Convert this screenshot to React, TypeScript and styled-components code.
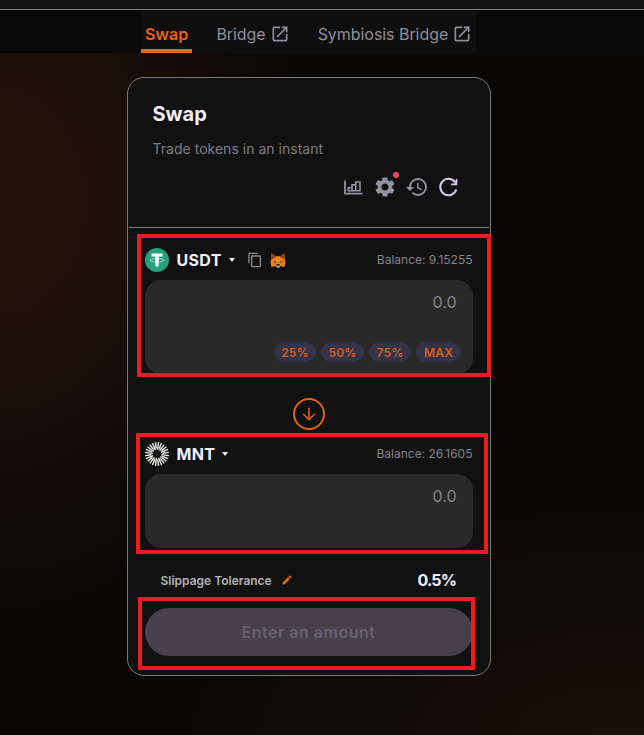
import React from "react";
import styled, { createGlobalStyle } from "styled-components";
import { MdOpenInNew, MdSettings, MdHistory, MdContentCopy, MdEdit } from "react-icons/md";

const GlobalStyle = createGlobalStyle`
  * { box-sizing: border-box; }
  body {
    margin: 0;
    background: #080706;
    font-family: Inter, "Liberation Sans", sans-serif;
  }
  svg { display: block; flex: none; }
`;

const Page = styled.div`
  height: 735px;
  overflow: hidden;
  display: flex;
  flex-direction: column;
  align-items: center;
  background:
    radial-gradient(ellipse 330px 440px at 0 200px, #231209 0%, #1d1009 38%, rgba(20, 12, 8, 0.6) 68%, transparent 100%),
    radial-gradient(ellipse 460px 250px at 620px 745px, #191007 0%, rgba(20, 14, 7, 0.6) 55%, transparent 100%),
    #090807;
`;

const TopStrip = styled.div`
  width: 100%;
  height: 10px;
  background: #111;
  border-bottom: 1px solid #7d7d7d;
`;

const NavBand = styled.div`
  width: 100%;
  height: 43px;
  padding-left: 141px;
  background: #090909;
`;

const Tabs = styled.nav`
  width: 335px;
  height: 43px;
  display: flex;
  background: #0f0f0f;
`;

const Tab = styled.a<{ $active?: boolean; $gap?: number }>`
  height: 43px;
  display: flex;
  align-items: center;
  gap: 4px;
  padding: ${(p) => (p.$active ? "8px 4px 0" : "8px 0 0")};
  margin-right: ${(p) => p.$gap ?? 0}px;
  border-bottom: 4px solid ${(p) => (p.$active ? "#ed6510" : "transparent")};
  border-radius: 2px 2px 0 0;
  color: ${(p) => (p.$active ? "#ed5f12" : "#8f8e9b")};
  font-size: 16px;
  font-weight: ${(p) => (p.$active ? 600 : 400)};
  letter-spacing: ${(p) => (p.$active ? "0.1px" : "-0.05px")};
  white-space: nowrap;
`;

const Card = styled.main`
  width: 364px;
  height: 599px;
  margin: 24px 26px 0 0;
  position: relative;
  border: 1px solid #7c7a78;
  border-radius: 17px;
  background: #111;
`;

const Header = styled.header`
  height: 150px;
  margin: 0 1px;
  padding: 24px 28px 0 23.5px;
  border-bottom: 1px solid #7f7f7f;
`;

const Title = styled.h1`
  margin: 0;
  font-size: 20px;
  line-height: 24px;
  font-weight: 700;
  color: #f4eeff;
`;

const Subtitle = styled.p`
  margin: 12px 0 0;
  font-size: 14px;
  line-height: 21px;
  letter-spacing: 0.02px;
  color: #7f7f86;
`;

const Tools = styled.div`
  display: flex;
  justify-content: flex-end;
  align-items: center;
  gap: 8px;
  height: 24px;
  margin-top: 16px;
  color: #9293a0;
`;

const SettingsTool = styled.span`
  position: relative;
`;

const Dot = styled.i`
  position: absolute;
  top: -3px;
  right: -2px;
  width: 6px;
  height: 6px;
  border-radius: 50%;
  background: #ed4b4b;
  box-shadow: 0 0 0 1px #1a1220;
`;

const Body = styled.div`
  padding: 0 17px;
`;

const TokenRow = styled.div<{ $top: number }>`
  height: 24px;
  margin: ${(p) => p.$top}px 0 8px;
  display: flex;
  align-items: center;
`;

const TokenName = styled.span`
  margin: 0 7px 0 7.5px;
  font-size: 16px;
  font-weight: 700;
  letter-spacing: 0.3px;
  color: #f4eeff;
`;

const Caret = styled.i`
  border: 3.5px solid transparent;
  border-top: 4px solid #f4eeff;
  border-bottom: 0;
`;

const TokenActions = styled.span`
  display: flex;
  align-items: center;
  gap: 7px;
  margin-left: 12px;
  color: #8b8a94;
`;

const Balance = styled.span`
  margin: -2px 0.5px 0 auto;
  font-size: 12px;
  color: #85858c;
`;

const AmountBox = styled.div<{ $height: number }>`
  height: ${(p) => p.$height}px;
  padding: 12px 12px 0;
  border-radius: 16px;
  background: #292929;
`;

const Amount = styled.div`
  height: 21px;
  padding-right: 4.5px;
  font-size: 16px;
  line-height: 21px;
  text-align: right;
  color: #85848b;
`;

const Chips = styled.div`
  display: flex;
  justify-content: flex-end;
  gap: 5px;
  margin-top: 29px;
`;

const Chip = styled.button<{ $width: number }>`
  width: ${(p) => p.$width}px;
  height: 20px;
  padding: 0;
  border: 0;
  border-radius: 10px;
  background: #353347;
  color: #d75f19;
  font: 600 12px/19px Inter, sans-serif;
  letter-spacing: 0.2px;
`;

const SwitchButton = styled.button`
  display: flex;
  align-items: center;
  justify-content: center;
  width: 32px;
  height: 32px;
  margin: 24px auto 0;
  padding: 0;
  border: 2px solid #e5620f;
  border-radius: 50%;
  background: transparent;
`;

const SlippageRow = styled.div`
  height: 24px;
  margin-top: 20px;
  padding: 0 17px 0 15.5px;
  display: flex;
  align-items: center;
  gap: 9px;
  font-size: 12px;
  font-weight: 600;
  color: #b4b4b4;
`;

const SlippageValue = styled.strong`
  margin-left: auto;
  font-size: 16px;
  font-weight: 700;
  letter-spacing: -0.9px;
  color: #f4eeff;
`;

const SubmitButton = styled.button`
  display: block;
  width: 328px;
  height: 48px;
  margin-top: 16px;
  padding: 0 1px 0 0;
  border: 0;
  border-radius: 24px;
  background: #47404b;
  color: #666072;
  font: 600 16px/48px Inter, sans-serif;
  letter-spacing: 0.5px;
`;

/* Red callout frame drawn over the card. */
const Callout = styled.div<{ $x: number; $y: number; $w: number; $h: number }>`
  position: absolute;
  left: ${(p) => p.$x}px;
  top: ${(p) => p.$y}px;
  width: ${(p) => p.$w}px;
  height: ${(p) => p.$h}px;
  border: 4px solid #ed1c24;
  border-radius: 1px;
  pointer-events: none;
`;

const ChartIcon = () => (
  <svg width="24" height="24" viewBox="0 0 24 24" fill="none" stroke="#9293a0" strokeWidth="1.8">
    <path d="M4 5.5v13.2h17.5" />
    <path d="M7.2 15.8v-3h3.8v3M11 15.8V9.9h3.8v5.9M14.8 15.8V7h4.2v8.8M6.4 15.8h13.4" strokeWidth="1.6" />
  </svg>
);

const RefreshIcon = () => (
  <svg width="24" height="24" viewBox="0 0 24 24" fill="none" stroke="#dacdec" strokeWidth="2.1">
    <path d="M18.3 7.4A8.2 8.2 0 1 0 19.3 14.5" />
    <path d="M20.3 4v6.2h-6.2v-1.6h3.4L18.7 7V4z" fill="#dacdec" stroke="none" />
  </svg>
);

const TetherIcon = () => (
  <svg width="24" height="24" viewBox="0 0 24 24">
    <circle cx="12" cy="12" r="12" fill="#26a17b" />
    <path d="M6.5 5.5h11v3h-3.9v10h-3.2v-10H6.5z" fill="#fff" />
    <ellipse cx="12" cy="12.3" rx="7" ry="1.8" fill="none" stroke="#d9efe8" strokeWidth=".7" />
    <path d="M10.4 9h3.2v4.5h-3.2z" fill="#fff" />
  </svg>
);

const FoxIcon = () => (
  <svg width="16" height="16" viewBox="0 0 32 32">
    <path d="M2 3l11 6h6l11-6v12l1 7-2 8-8-2-3 3h-4l-3-3-8 2-2-8 1-7z" fill="#e77d20" />
    <path d="M2 3l11 7-7 3-4 3zM30 3l-11 7 7 3 4 3z" fill="#8a4618" />
    <path d="M13 9h6l2 10-5 3-5-3z" fill="#f6851b" />
    <path d="M7 18l5 1-1 3zM25 18l-5 1 1 3z" fill="#3a2b23" />
    <path d="M11 26l3-2h4l3 2-2 5h-6z" fill="#a99b90" />
    <path d="M13 24h6l1 3h-8z" fill="#29211d" />
  </svg>
);

const MantleIcon = () => (
  <svg width="24" height="24" viewBox="0 0 24 24" stroke="#f4f4f0" strokeWidth="1.35">
    {Array.from({ length: 24 }, (_, i) => (
      <line key={i} x1="12" y1="0.1" x2="12" y2={i % 2 ? 6.4 : 7.8} transform={`rotate(${i * 15 + 7.5} 12 12)`} />
    ))}
  </svg>
);

const ArrowDown = () => (
  <svg width="16" height="16" viewBox="0 0 16 16" fill="none" stroke="#e5620f" strokeWidth="1.5">
    <path d="M8 1.8v12M2.2 8L8 13.8 13.8 8" />
  </svg>
);

const chips = [
  { label: "25%", width: 42 },
  { label: "50%", width: 43 },
  { label: "75%", width: 42 },
  { label: "MAX", width: 45 },
];

export default function App() {
  return (
    <Page>
      <GlobalStyle />
      <TopStrip />
      <NavBand>
        <Tabs>
          <Tab $active $gap={24}>Swap</Tab>
          <Tab $gap={28}>Bridge <MdOpenInNew size={20} /></Tab>
          <Tab>Symbiosis Bridge <MdOpenInNew size={20} /></Tab>
        </Tabs>
      </NavBand>
      <Card>
        <Header>
          <Title>Swap</Title>
          <Subtitle>Trade tokens in an instant</Subtitle>
          <Tools>
            <ChartIcon />
            <SettingsTool><MdSettings size={24} /><Dot /></SettingsTool>
            <MdHistory size={24} />
            <RefreshIcon />
          </Tools>
        </Header>
        <Body>
          <TokenRow $top={20}>
            <TetherIcon />
            <TokenName>USDT</TokenName>
            <Caret />
            <TokenActions><MdContentCopy size={16} /><FoxIcon /></TokenActions>
            <Balance>Balance: 9.15255</Balance>
          </TokenRow>
          <AmountBox $height={94}>
            <Amount>0.0</Amount>
            <Chips>
              {chips.map((c) => <Chip key={c.label} $width={c.width}>{c.label}</Chip>)}
            </Chips>
          </AmountBox>
          <SwitchButton><ArrowDown /></SwitchButton>
          <TokenRow $top={12}>
            <MantleIcon />
            <TokenName>MNT</TokenName>
            <Caret />
            <Balance>Balance: 26.1605</Balance>
          </TokenRow>
          <AmountBox $height={74}>
            <Amount>0.0</Amount>
          </AmountBox>
          <SlippageRow>
            Slippage Tolerance <MdEdit size={12} color="#ed6510" />
            <SlippageValue>0.5%</SlippageValue>
          </SlippageRow>
          <SubmitButton>Enter an amount</SubmitButton>
        </Body>
        <Callout $x={9} $y={156} $w={354} $h={143} />
        <Callout $x={8} $y={355} $w={352} $h={121} />
        <Callout $x={10} $y={519} $w={337} $h={73} />
      </Card>
    </Page>
  );
}
